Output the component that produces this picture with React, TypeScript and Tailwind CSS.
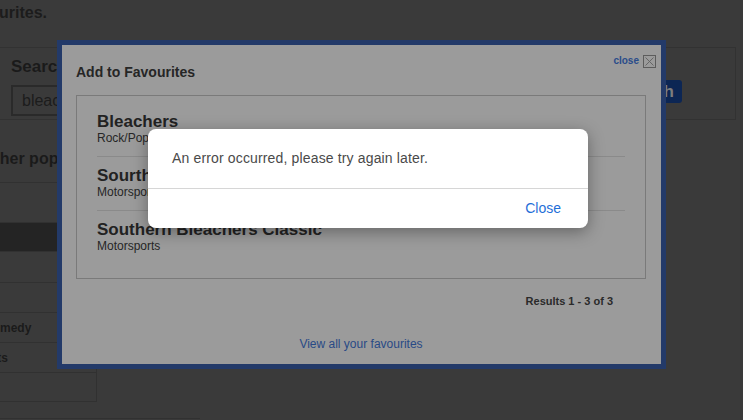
const rows = [
	{ label: "", dark: false, h: "h-[40px]" },
	{ label: "", dark: true, h: "h-[29px]" },
	{ label: "", dark: false, h: "h-[31px]" },
	{ label: "", dark: false, h: "h-[30px]" },
	{ label: "Comedy", dark: false, h: "h-[30px]" },
	{ label: "Arts", dark: false, h: "h-[30px]" },
	{ label: "", dark: false, h: "h-[29px]" },
]

const favourites = [
	{ name: "Bleachers", genre: "Rock/Pop" },
	{ name: "Sourthern Bleachers", genre: "Motorsports" },
	{ name: "Southern Bleachers Classic", genre: "Motorsports" },
]

const BackgroundPage = () => {
	return (
		<div className="flex flex-col">
			<div className="h-[47px] pt-[3px] -ml-[1px] text-[16px] leading-[20px] font-bold text-[#1c1c1c]">
				urites.
			</div>
			<div className="h-[73px] w-[736px] border-y border-r border-[#323232] flex items-start justify-between">
				<div className="pl-[11px] pt-[9px]">
					<p className="text-[17px] leading-[20px] font-bold text-[#1a1a1a]">Search</p>
					<div className="mt-[8px] w-[220px] h-[31px] border-2 border-[#2a2a2a] pl-[9px] text-[16px] leading-[27px] text-[#1c1c1c]">
						bleach
					</div>
				</div>
				<div className="mt-[32px] mr-[53px] h-[23px] px-[8px] rounded-[3px] bg-[#0c2654] text-[17px] leading-[23px] font-bold text-[#7d7d7d]">
					Search
				</div>
			</div>
			<div className="h-[62px] pt-[29px] -ml-[18px] text-[16px] leading-[20px] font-bold text-[#1a1a1a]">
				Other popular searches
			</div>
			<div className="w-[97px] border-t border-r border-[#313131]">
				{rows.map((row, i) => (
					<div
						key={i}
						className={`${row.h} border-b border-[#313131] -ml-[30px] pl-[14px] text-[12px] font-bold text-[#1a1a1a] flex items-center ${
							row.dark ? "bg-[#242424]" : ""
						}`}
					>
						{row.label}
					</div>
				))}
			</div>
			<div className="h-[17px] w-[200px] border-b border-[#313131]" />
		</div>
	)
}

const FavouritesModal = () => {
	return (
		<div className="absolute left-[57px] top-[40px] w-[609px] h-[329px] border-[5px] border-[#233a69] bg-[#9b9b9b]">
			<div className="relative h-full pl-[14px] pr-[15px] text-[#262626]">
				<div className="absolute right-[5px] top-[9px] flex items-center gap-[4px]">
					<span className="text-[10px] leading-[13px] font-bold text-[#2a4c8a] mb-[1px]">
						close
					</span>
					<div className="w-[13px] h-[13px] border border-[#5c5c5c] flex items-center justify-center">
						<svg width="9" height="9" viewBox="0 0 9 9">
							<path d="M0.5 0.5 L8.5 8.5 M8.5 0.5 L0.5 8.5" stroke="#606060" strokeWidth="0.9" />
						</svg>
					</div>
				</div>
				<h2 className="pt-[19px] text-[14px] leading-[16px] font-bold">Add to Favourites</h2>
				<div className="mt-[15px] h-[184px] border border-[#7a7a7a] px-[20px]">
					{favourites.map((fav, i) => (
						<div
							key={i}
							className={
								i === 0
									? "pt-[16px] pb-[12px]"
									: "pt-[9px] pb-[12px] border-t border-[#8a8a8a]"
							}
						>
							<p className="text-[17px] leading-[19px] font-bold text-[#222]">{fav.name}</p>
							<p className="mt-[1px] text-[12px] leading-[12px] text-[#262626]">{fav.genre}</p>
						</div>
					))}
				</div>
				<p className="mt-[15px] pr-[33px] text-right text-[11px] leading-[14px] font-bold text-[#2a2a2a]">
					Results 1 - 3 of 3
				</p>
				<p className="mt-[29px] text-center text-[12px] leading-[14px] text-[#294a86]">
					View all your favourites
				</p>
			</div>
		</div>
	)
}

const ErrorAlert = () => {
	return (
		<div className="absolute left-[148px] top-[129px] w-[440px] h-[99px] rounded-[8px] bg-white shadow-[0_4px_16px_rgba(0,0,0,0.35)] flex flex-col">
			<div className="h-[59px] pl-[24px] flex items-center text-[14px] tracking-[0.15px] text-[#4a4a4a]">
				An error occurred, please try again later.
			</div>
			<div className="border-t border-[#d6d6d6] flex-1 flex items-center justify-end pr-[27px]">
				<span className="text-[14px] text-[#1f6fd8]">Close</span>
			</div>
		</div>
	)
}

const App = () => {
	return (
		<div className="relative w-[743px] h-[420px] overflow-hidden bg-[#3a3a3a] font-['Liberation_Sans',Arial,sans-serif]">
			<BackgroundPage />
			<FavouritesModal />
			<ErrorAlert />
		</div>
	)
}

export default App
